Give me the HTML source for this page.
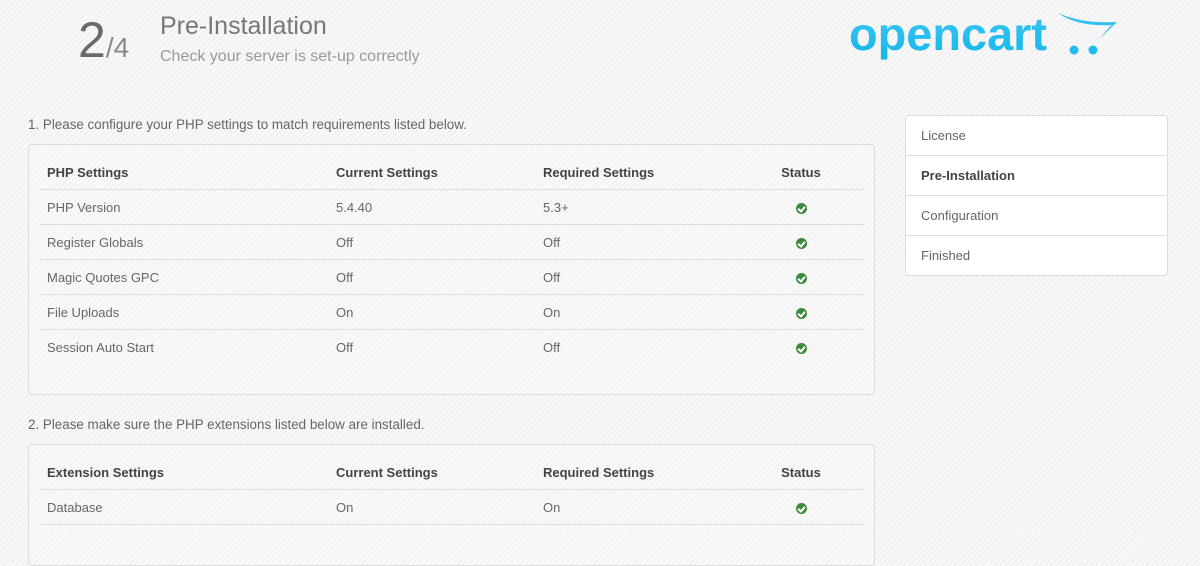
<!DOCTYPE html>
<html><head><meta charset="utf-8"><style>
body{margin:0;width:1200px;height:531px;overflow:hidden;font-family:"Liberation Sans",sans-serif;font-size:13px;color:#666;
background:#f7f7f7 repeating-linear-gradient(135deg,#f9f9f9 0 2px,#f1f1f1 2px 4px);position:relative}
.a{position:absolute}
.step{left:78px;top:11px;font-size:50px;color:#6a6a6a;}
.step span{font-size:28px;color:#888}
.t1{left:160px;top:12px;font-size:25px;color:#777}
.t2{left:160px;top:48px;font-size:16px;color:#999}
.panel{position:absolute;left:28px;width:845px;border:1px solid #ddd;border-radius:4px;background:rgba(255,255,255,.15)}
table{border-collapse:collapse;margin:10px 0 0 11px;width:824px}
td,th{height:34px;text-align:left;padding:0 0 0 7px;border-bottom:1px solid #ddd;font-weight:normal}
th{font-weight:bold;color:#444;height:34px;border-bottom:1px solid #ddd}
tr:last-child td{border-bottom:none}
.c1{width:282px}.c2{width:200px}.c3{width:199px}
.s{text-align:center;padding:0 4px 0 0}
.ok{display:inline-block;width:11px;height:11px;border-radius:50%;background:#3c8b3c;vertical-align:middle;position:relative}
.ok:after{content:"";position:absolute;left:3px;top:2px;width:3px;height:5px;border:solid #fff;border-width:0 2px 2px 0;transform:rotate(40deg)}
.side{left:905px;top:115px;width:261px;border:1px solid #ddd;border-radius:4px;background:#fff}
.side div{height:39px;line-height:39px;padding-left:15px;border-bottom:1px solid #ddd;color:#666}
.side div:last-child{border-bottom:none}
</style></head><body>
<div class="a step">2<span>/4</span></div>
<div class="a t1">Pre-Installation</div>
<div class="a t2">Check your server is set-up correctly</div>
<svg class="a" style="left:846px;top:10px" width="275" height="55" viewBox="0 0 275 55">
<defs><linearGradient id="g" x1="0" y1="0" x2="0" y2="1"><stop offset="0" stop-color="#3ec8f2"/><stop offset="1" stop-color="#14b6ec"/></linearGradient></defs>
<text x="3" y="40" font-family="Liberation Sans,sans-serif" font-weight="bold" font-size="46" fill="url(#g)" textLength="198" lengthAdjust="spacingAndGlyphs">opencart</text>
<path d="M212 3 Q236 14 271 12 Q262 20 254 29 Q262 18 266 15 Q232 17 212 3Z" fill="#2fc0ef"/>
<circle cx="228" cy="40" r="4.5" fill="#22bbee"/><circle cx="247" cy="40" r="4.5" fill="#22bbee"/>
</svg>
<div class="a" style="left:28px;top:117px;font-size:13.4px">1. Please configure your PHP settings to match requirements listed below.</div>
<div class="panel" style="top:144px;height:249px"><table>
<tr><th class="c1">PHP Settings</th><th class="c2">Current Settings</th><th class="c3">Required Settings</th><th class="s">Status</th></tr>
<tr><td>PHP Version</td><td>5.4.40</td><td>5.3+</td><td class="s"><i class="ok"></i></td></tr>
<tr><td>Register Globals</td><td>Off</td><td>Off</td><td class="s"><i class="ok"></i></td></tr>
<tr><td>Magic Quotes GPC</td><td>Off</td><td>Off</td><td class="s"><i class="ok"></i></td></tr>
<tr><td>File Uploads</td><td>On</td><td>On</td><td class="s"><i class="ok"></i></td></tr>
<tr><td>Session Auto Start</td><td>Off</td><td>Off</td><td class="s"><i class="ok"></i></td></tr>
</table></div>
<div class="a" style="left:28px;top:417px;font-size:13.4px">2. Please make sure the PHP extensions listed below are installed.</div>
<div class="panel" style="top:444px;height:120px"><table>
<tr><th class="c1">Extension Settings</th><th class="c2">Current Settings</th><th class="c3">Required Settings</th><th class="s">Status</th></tr>
<tr><td style="border-bottom:1px solid #ddd">Database</td><td style="border-bottom:1px solid #ddd">On</td><td style="border-bottom:1px solid #ddd">On</td><td class="s" style="border-bottom:1px solid #ddd"><i class="ok"></i></td></tr>
<tr><td>&nbsp;</td><td></td><td></td><td></td></tr>
</table></div>
<div class="a side">
<div>License</div><div style="font-weight:bold;color:#444">Pre-Installation</div><div>Configuration</div><div>Finished</div>
</div>
</body></html>
